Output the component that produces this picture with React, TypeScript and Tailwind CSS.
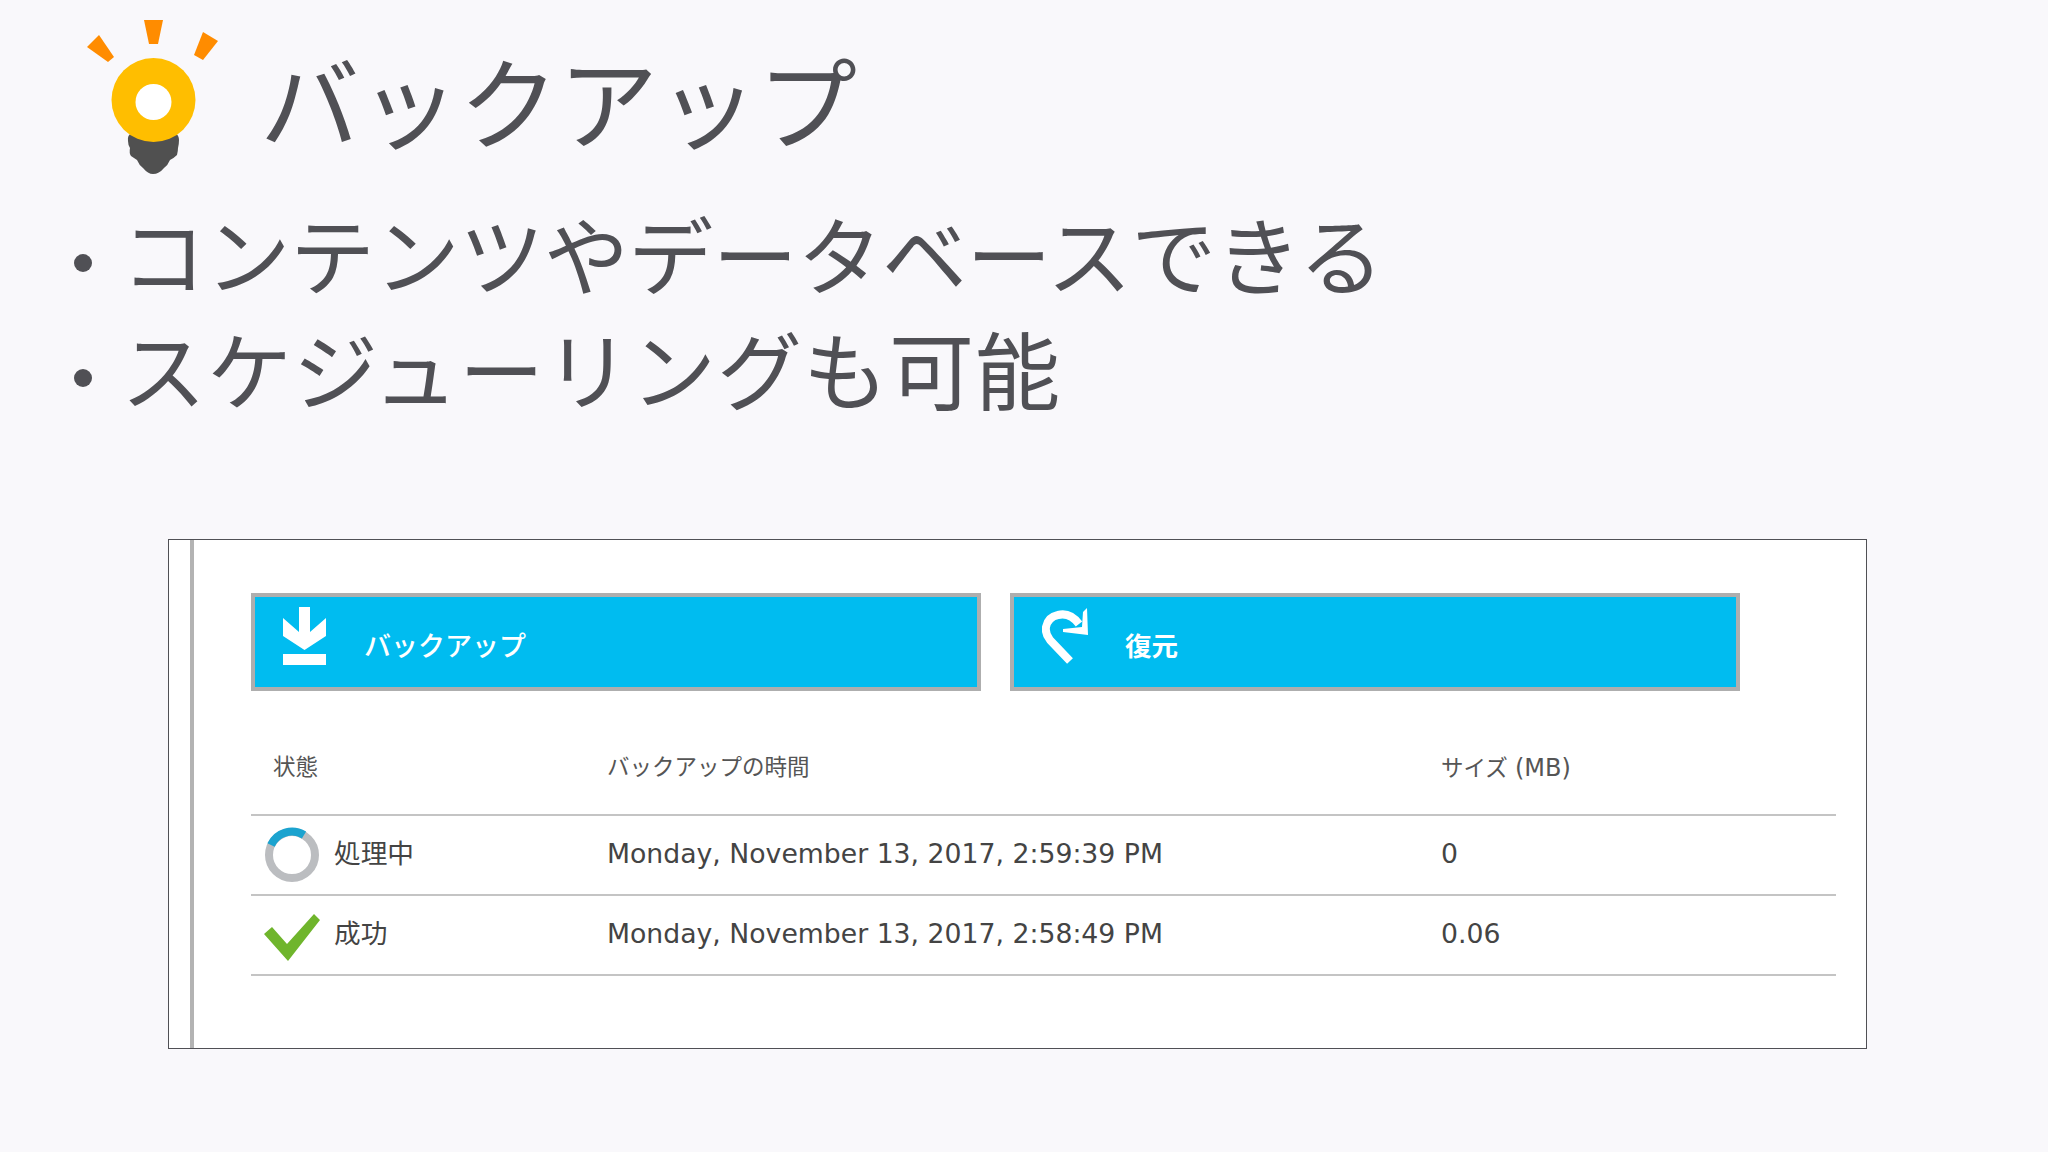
const CJK = "font-['Noto_Sans_CJK_JP','Noto_Sans',sans-serif]";

const ROWS = [
  { status: "処理中", time: "Monday, November 13, 2017, 2:59:39 PM", size: "0", icon: "spin" },
  { status: "成功", time: "Monday, November 13, 2017, 2:58:49 PM", size: "0.06", icon: "check" },
];

function Bulb() {
  return (
    <svg viewBox="85 15 135 160" className="h-[160px] w-[135px] shrink-0">
      <polygon points="144,20 163,20 158,44 149,44" fill="#ff8c00" />
      <polygon points="99,35 114,57 108,62 87,47" fill="#ff8c00" />
      <polygon points="203,32 218,41 203,60 194,55" fill="#ff8c00" />
      <path d="M132 133 Q127 135 128 141 Q128 145 130 148 Q129 153 131 156 Q134 158 137 160 Q139 165 143 168 Q148 174 153 174 Q159 174 164 168 Q168 165 170 160 Q174 158 177 155 Q178 151 178 148 Q179 144 179 140 Q179 135 175 133 Z" fill="#505050" />
      <circle cx="153.5" cy="100" r="42" fill="#ffbe00" />
      <circle cx="153.5" cy="102" r="18" fill="#ffffff" />
    </svg>
  );
}

function DownloadIcon() {
  return (
    <svg viewBox="0 0 44 60" className="-mt-[10px] h-[60px] w-[44px] fill-white">
      <polygon points="16,0 27,0 27,25 43,11 43,29 21.5,43 0,29 0,11 16,25" />
      <rect x="0" y="47" width="43" height="11" />
    </svg>
  );
}

function RestoreIcon() {
  return (
    <svg viewBox="0 0 48 58" className="-mt-[12px] h-[58px] w-[48px]">
      <path d="M28 54 L8 33 Q3 27 4 20 Q6 10 16 8 Q28 5 37 17" fill="none" stroke="#fff" strokeWidth="8" />
      <polygon points="45,1 46,28 21,25 21,22 40,20 41,5" fill="#fff" />
    </svg>
  );
}

function Spinner() {
  return (
    <svg viewBox="0 0 56 56" className="h-[56px] w-[56px]">
      <circle cx="28" cy="28" r="23" fill="none" stroke="#bbbdc0" strokeWidth="8" />
      <path d="M7 18 A23 23 0 0 1 40 8" fill="none" stroke="#1ba3cf" strokeWidth="8" />
    </svg>
  );
}

function Check() {
  return (
    <svg viewBox="0 0 56 48" className="mt-[6px] h-[48px] w-[56px]">
      <polygon points="0,20 8,13 23,30 50,0 56,6 24,47" fill="#6fb52c" />
    </svg>
  );
}

export default function App() {
  return (
    <div className={`h-[1152px] w-[2048px] overflow-hidden bg-[#f9f8fb] text-[#505055] ${CJK}`}>
      <header className="flex items-start pl-[85px] pt-[15px]">
        <Bulb />
        <h1 className="ml-[40px] mt-[14px] text-[99.5px] font-normal leading-[140px]">バックアップ</h1>
      </header>

      <ul className="mt-[19px] pl-[74px] text-[85px] font-normal leading-[115px]">
        <li className="flex items-center tracking-[-0.45px]">
          <span className="mr-[29px] mt-[22px] h-[18px] w-[18px] rounded-full bg-[#505055]" />
          コンテンツやデータベースできる
        </li>
        <li className="flex items-center tracking-[1px]">
          <span className="mr-[29px] mt-[22px] h-[18px] w-[18px] rounded-full bg-[#505055]" />
          スケジューリングも可能
        </li>
      </ul>

      <section className="ml-[168px] mt-[115px] flex h-[510px] w-[1699px] border border-[#505055] bg-white">
        <div className="w-[25px] shrink-0 border-r-4 border-[#b3b3b3]" />
        <div className="flex-1 pl-[57px] pr-[30px] pt-[53px]">
          <div className="flex gap-[29px]">
            <button className="flex h-[98px] w-[730px] items-center border-4 border-[#aeaeae] bg-[#00bcf0] pl-[28px] text-white">
              <DownloadIcon />
              <span className="ml-[37px] mt-[6px] text-[27px] font-medium">バックアップ</span>
            </button>
            <button className="flex h-[98px] w-[730px] items-center border-4 border-[#aeaeae] bg-[#00bcf0] pl-[28px] text-white">
              <RestoreIcon />
              <span className="ml-[35px] mt-[6px] text-[26.5px] font-bold">復元</span>
            </button>
          </div>

          <div className="mt-[28px] grid h-[97px] grid-cols-[356px_834px_1fr] items-center border-b-2 border-[#c4c4c4] pt-[2px] font-['DejaVu_Sans','Noto_Sans_CJK_JP',sans-serif] text-[22.5px] text-[#555]">
            <span className="pl-[22px]">状態</span>
            <span>バックアップの時間</span>
            <span>サイズ <span className="text-[24px]">(MB)</span></span>
          </div>

          {ROWS.map((row) => (
            <div key={row.time} className="grid h-[80px] grid-cols-[356px_834px_1fr] items-center border-b-2 border-[#c4c4c4] text-[26.7px] text-[#444]">
              <div className="flex items-center pl-[13px]">
                <span className="flex w-[70px] justify-start">{row.icon === "spin" ? <Spinner /> : <Check />}</span>
                <span className="-mt-[6px]">{row.status}</span>
              </div>
              <span className="-mt-[1px] font-['DejaVu_Sans',sans-serif]">{row.time}</span>
              <span className="-mt-[1px] font-['DejaVu_Sans',sans-serif]">{row.size}</span>
            </div>
          ))}
        </div>
      </section>
    </div>
  );
}
